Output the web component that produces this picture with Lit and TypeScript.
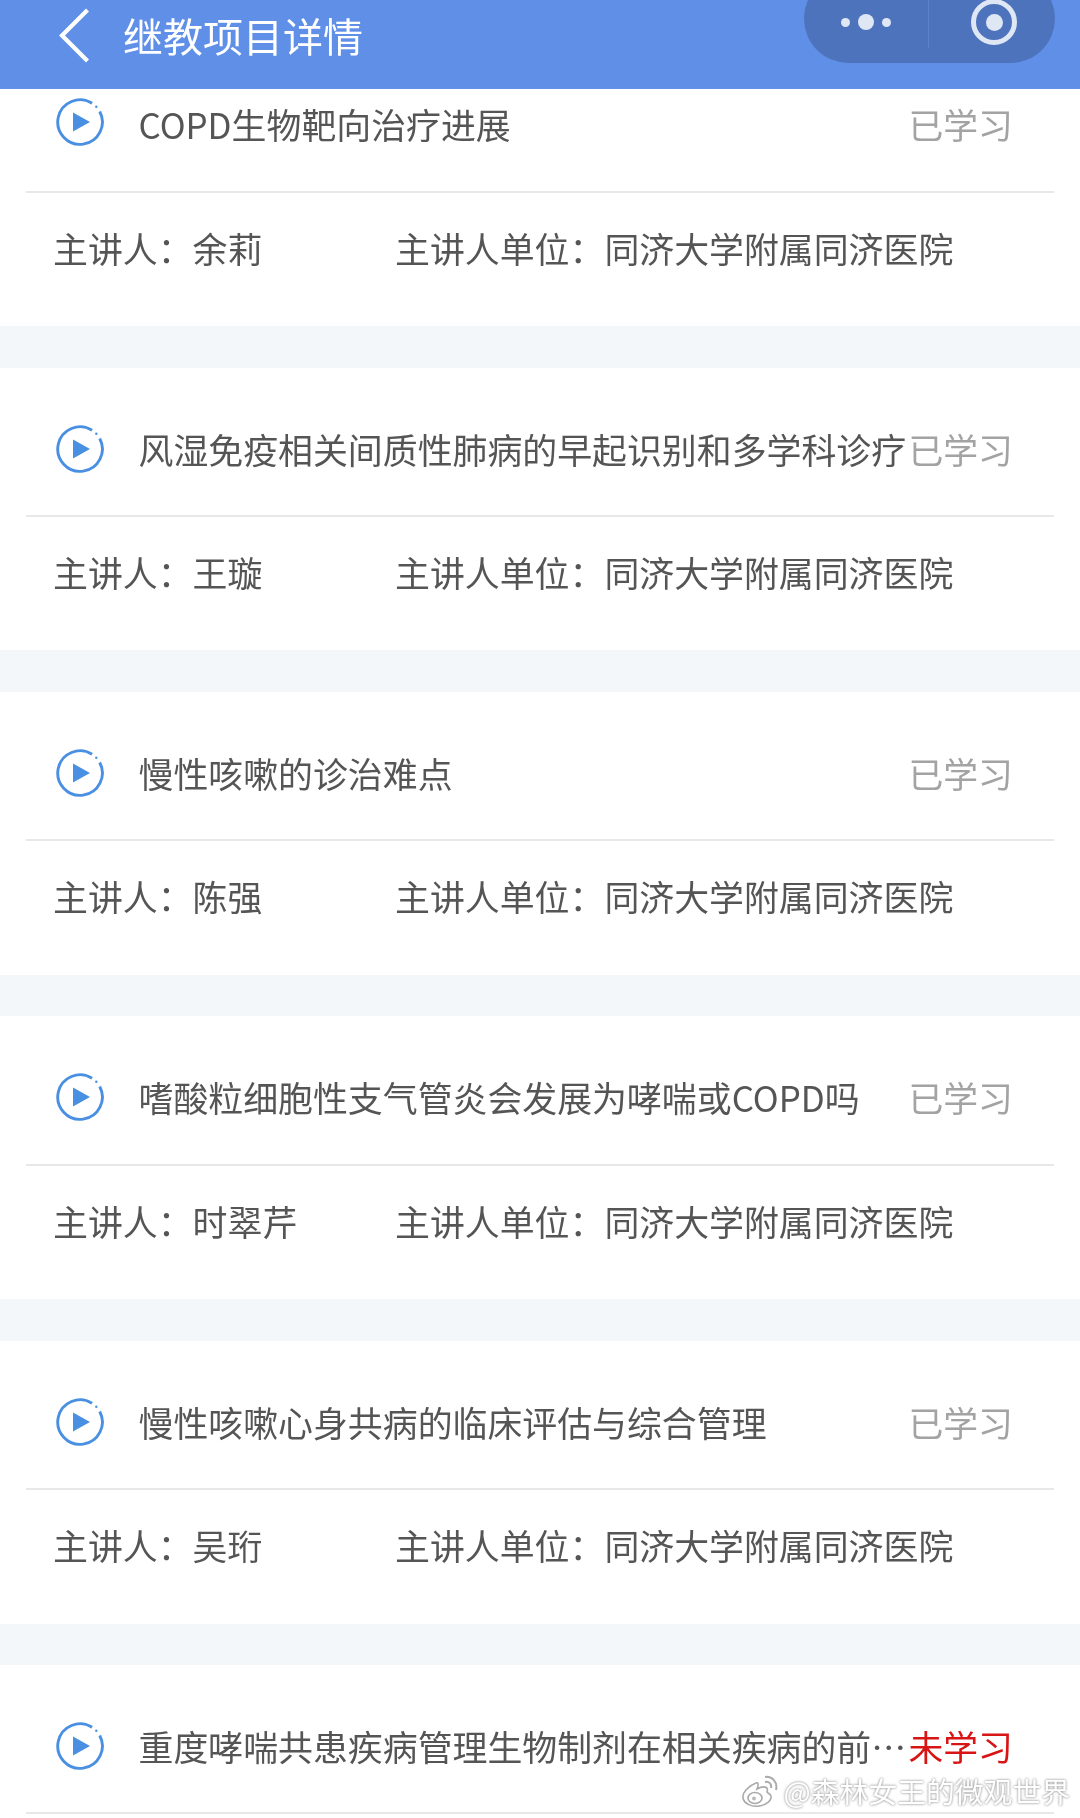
import { LitElement, html, css } from "lit";
import { customElement } from "lit/decorators.js";

const COLON = "\uFF1A";
const ITEMS = [
  { t: "COPD生物靶向治疗进展", p: "余莉", s: "已学习" },
  { t: "风湿免疫相关间质性肺病的早起识别和多学科诊疗", p: "王璇", s: "已学习" },
  { t: "慢性咳嗽的诊治难点", p: "陈强", s: "已学习" },
  { t: "嗜酸粒细胞性支气管炎会发展为哮喘或COPD吗", p: "时翠芹", s: "已学习" },
  { t: "慢性咳嗽心身共病的临床评估与综合管理", p: "吴珩", s: "已学习" },
  { t: "重度哮喘共患疾病管理生物制剂在相关疾病的前沿进展", p: "", s: "未学习" },
];

@customElement("app-root")
export class AppRoot extends LitElement {
  static styles = css`
    :host {
      display: block;
      width: 1080px;
      height: 1818px;
      overflow: hidden;
      position: relative;
      background: #f3f7fa;
      font-family: "Noto Sans CJK SC", "Noto Sans", sans-serif;
      color: #555;
      filter: blur(0.4px);
    }
    .nav {
      height: 89px;
      background: #5f8fe6;
      display: flex;
      align-items: flex-start;
      position: relative;
      color: #fff;
    }
    .back { margin: 8px 0 0 58px; width: 34px; height: 56px; flex: none; }
    .nav-title { font-size: 40px; line-height: 56px; margin: 7px 0 0 31px; }
    .capsule {
      position: absolute;
      left: 804px;
      top: -26px;
      width: 251px;
      height: 89px;
      border-radius: 45px;
      background: #4d73bc;
      display: flex;
      align-items: flex-start;
    }
    .cap-l {
      width: 125px;
      height: 74px;
      padding-top: 22px;
      box-sizing: border-box;
      display: flex;
      align-items: center;
      justify-content: center;
      gap: 8px;
      border-right: 1px solid #5e83c9;
    }
    .dot { width: 9px; height: 9px; border-radius: 50%; background: #dfe7f5; }
    .dot.big { width: 16px; height: 16px; }
    .cap-r { flex: 1; display: flex; justify-content: center; padding: 25px 0 0 4px; }
    .ring { width: 36px; height: 36px; border: 5px solid #dfe7f5; border-radius: 50%; display: flex; align-items: center; justify-content: center; }
    .ring i { width: 17px; height: 17px; border-radius: 50%; background: #dfe7f5; }
    .list { display: flex; flex-direction: column; gap: 41.7px; }
    .card { background: #fff; height: 282.7px; }
    .card.first { height: 237px; }
    .head {
      height: 147.3px;
      margin: 0 26px;
      border-bottom: 2px solid #e8e8e8;
      display: flex;
      align-items: flex-start;
    }
    .first .head { height: 102px; }
    .icon { width: 50px; height: 50px; margin: 56px 0 0 29px; flex: none; }
    .first .icon { margin-top: 8px; }
    .title {
      font-size: 34.9px;
      line-height: 50px;
      margin: 56px 0 0 33.5px;
      width: 770px;
      white-space: nowrap;
      overflow: hidden;
      text-overflow: ellipsis;
      flex: none;
    }
    .first .title { margin-top: 10px; }
    .status { font-size: 34.8px; line-height: 50px; margin: 56px 0 0 0; color: #a3a3a3; white-space: nowrap; }
    .first .status { margin-top: 10px; }
    .status.todo { color: #d81414; }
    .info { display: flex; font-size: 34.9px; line-height: 50px; padding: 30px 0 0 53px; white-space: nowrap; }
    .speaker { width: 342px; flex: none; }
    .wm {
      position: absolute;
      right: 10px;
      top: 1771px;
      display: flex;
      align-items: center;
      gap: 4px;
      font-size: 28.8px;
      line-height: 40px;
      color: #fff;
      text-shadow: 0 0 3px #9a9a9a, 0 0 2px #b8b8b8;
    }
    .wm svg { width: 40px; height: 34px; flex: none; }
  `;

  render() {
    return html`
      <div class="nav">
        <svg class="back" viewBox="0 0 34 56"><path d="M29.5 2 L4 27.5 L29.5 53" fill="none" stroke="#fff" stroke-width="4.2"/></svg>
        <div class="nav-title">继教项目详情</div>
        <div class="capsule">
          <div class="cap-l"><span class="dot"></span><span class="dot big"></span><span class="dot"></span></div>
          <div class="cap-r"><div class="ring"><i></i></div></div>
        </div>
      </div>
      <div class="list">
        ${ITEMS.map(
          (it, i) => html`
            <div class="card ${i === 0 ? "first" : ""}">
              <div class="head">
                <svg class="icon" viewBox="0 0 50 50">
                  <path d="M37.1 6.3 A22.3 22.3 0 1 0 44.7 14.5" fill="none" stroke="#4a90e2" stroke-width="2.9"/>
                  <circle cx="41.3" cy="9.8" r="1.2" fill="#4a90e2"/>
                  <path d="M18 15.5 L35 25 L18 34.5 Z" fill="#4a90e2"/>
                </svg>
                <div class="title">${it.t}</div>
                <div class="status ${it.s === "未学习" ? "todo" : ""}">${it.s}</div>
              </div>
              ${it.p
                ? html`<div class="info">
                    <div class="speaker">主讲人${COLON}${it.p}</div>
                    <div>主讲人单位${COLON}同济大学附属同济医院</div>
                  </div>`
                : ""}
            </div>
          `
        )}
      </div>
      <div class="wm">
        <svg viewBox="0 0 40 34">
          <path d="M16 9 C8 12 2 19 3 24 C4 30 12 33 19 32 C27 31 32 26 31 22 C30 19 27 19 27 18 C29 13 24 11 17 15 C19 10 18 8 16 9 Z" fill="#fff" stroke="#aaa" stroke-width="1.6"/>
          <ellipse cx="15" cy="24" rx="7" ry="5.5" fill="none" stroke="#aaa" stroke-width="1.6"/>
          <circle cx="14" cy="24.5" r="2" fill="#bbb"/>
          <path d="M25 3 C32 2 38 8 36 16 M25 8 C29 7 32 10 31 14" fill="none" stroke="#aaa" stroke-width="2"/>
        </svg>
        <span>@森林女王的微观世界</span>
      </div>
    `;
  }
}
